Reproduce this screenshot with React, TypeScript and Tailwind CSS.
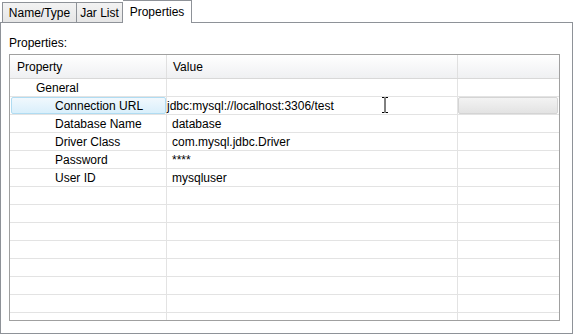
import React from "react";

const rows = [
  { name: "General", value: "", indent: 25 },
  { name: "Connection URL", value: "jdbc:mysql://localhost:3306/test", indent: 44, selected: true },
  { name: "Database Name", value: "database", indent: 44 },
  { name: "Driver Class", value: "com.mysql.jdbc.Driver", indent: 44 },
  { name: "Password", value: "****", indent: 44 },
  { name: "User ID", value: "mysqluser", indent: 44 },
];

const emptyRows = Array.from({ length: 9 });

export default function App() {
  return (
    <div
      className="relative w-[574px] h-[335px] bg-white overflow-hidden text-[12px] text-black"
      style={{ fontFamily: '"Liberation Sans", Arial, sans-serif' }}
    >
      {/* tabs */}
      <div className="flex items-end h-[22px] pl-[2px]">
        <div className="w-[75px] h-[20px] flex items-center justify-center border border-b-0 border-[#8e9298] bg-gradient-to-b from-[#f3f3f3] to-[#e6e6e6]">
          Name/Type
        </div>
        <div className="w-[46px] h-[20px] flex items-center justify-center border border-b-0 border-l-0 border-[#8e9298] bg-gradient-to-b from-[#f3f3f3] to-[#e6e6e6]">
          Jar List
        </div>
        <div className="relative z-10 w-[69px] h-[23px] -mb-[1px] flex items-center justify-center border border-b-0 border-l-0 border-[#8e9298] bg-white">
          Properties
        </div>
      </div>

      {/* panel */}
      <div className="w-[573px] h-[312px] border border-[#8e9298] bg-white">
        <div className="pt-[13px] pl-[8px] leading-[15px]">Properties:</div>
        <div className="ml-[8px] mt-[3px] w-[551px] h-[267px] border border-[#a0a0a0] overflow-hidden">
          {/* header */}
          <div className="flex h-[24px] border-b border-[#d8d8d8] bg-gradient-to-b from-white to-[#eff0f2]">
            <div className="w-[157px] pl-[7px] flex items-center border-r border-[#e0e0e0]">Property</div>
            <div className="w-[291px] pl-[6px] flex items-center border-r border-[#e0e0e0]">Value</div>
            <div className="flex-1" />
          </div>
          {/* rows */}
          {rows.map((r) => (
            <div key={r.name} className="flex h-[18px] border-b border-[#e3e3e3]">
              <div className="w-[157px] pl-[1px] border-r border-[#e3e3e3] flex">
                <div
                  className={`flex-1 flex items-center ${
                    r.selected
                      ? "border border-[#b0dcf2] rounded-[2px] bg-gradient-to-b from-[#f1f8fd] to-[#d9effb]"
                      : ""
                  }`}
                  style={{ paddingLeft: r.selected ? r.indent - 1 : r.indent }}
                >
                  {r.name}
                </div>
              </div>
              <div className={`w-[291px] flex items-center border-r border-[#e3e3e3] ${r.selected ? "pl-0" : "pl-[5px]"}`}>
                {r.value}
              </div>
              <div className="flex-1 flex pr-[1px]">
                {r.selected && (
                  <div className="flex-1 border border-[#d4d4d4] rounded-[2px] bg-gradient-to-b from-[#f3f3f3] to-[#e3e3e3]" />
                )}
              </div>
            </div>
          ))}
          {emptyRows.map((_, i) => (
            <div key={i} className="flex h-[18px] border-b border-[#e3e3e3]">
              <div className="w-[157px] border-r border-[#e3e3e3]" />
              <div className="w-[291px] border-r border-[#e3e3e3]" />
              <div className="flex-1" />
            </div>
          ))}
        </div>
      </div>

      {/* text cursor */}
      <svg className="absolute left-[381px] top-[97px]" width="8" height="16" viewBox="0 0 8 16">
        <path d="M1 0.5h2.5M4.5 0.5h2.5M4 1v14M1 15.5h2.5M4.5 15.5h2.5" stroke="#000" strokeWidth="1" fill="none" />
      </svg>
    </div>
  );
}
